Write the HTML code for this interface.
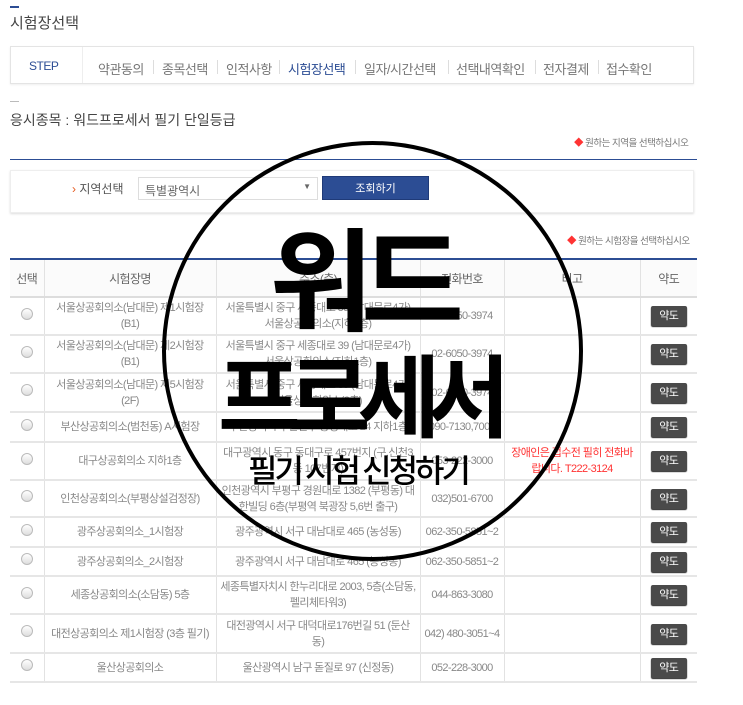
<!DOCTYPE html>
<html><head><meta charset="utf-8"><style>
*{margin:0;padding:0;box-sizing:border-box}
body{width:743px;height:705px;background:#fff;font-family:"Liberation Sans","Noto Sans CJK KR",sans-serif;color:#666;position:relative;overflow:hidden}
.abs{position:absolute}
.step{left:10px;top:46px;width:684px;height:38px;border:1px solid #e4e4e4;box-shadow:0 1px 2px #eee}
.step span{position:absolute;top:12px;font-size:13px;color:#777;letter-spacing:-0.5px}
.sep{position:absolute;top:13px;width:1px;height:14px;background:#ddd}
table{position:absolute;left:10px;top:258px;width:687px;border-collapse:collapse;font-size:11px;color:#888;letter-spacing:-0.6px;text-align:center}
th{height:38px;font-weight:normal;color:#666;font-size:12px;border-top:2px solid #2c4d94;border-bottom:2px solid #ddd;background:#fbfbfb}
td{border-bottom:2px solid #e6e6e6;line-height:16px}
th,td{border-left:1px solid #e2e2e2}
th:first-child,td:first-child{border-left:none}
.rd{display:inline-block;width:12px;height:12px;border-radius:50%;border:1px solid #bbb;background:linear-gradient(#fff,#ddd)}
.btn{display:inline-block;width:36px;height:20px;line-height:20px;background:#4a4a4a;color:#fff;font-size:11px;border-radius:2px;box-shadow:0 1px 1px #222}
.red{color:#ff3333}
.big{font-family:"Noto Sans CJK KR",sans-serif;font-weight:700;color:#000;white-space:nowrap;line-height:1}
</style></head><body>
<div class="abs" style="left:10px;top:6px;width:9px;height:2px;background:#2c4d94"></div>
<div class="abs" style="left:10px;top:12px;font-size:15px;color:#444">시험장선택</div>
<div class="abs step">
<span style="left:18px;color:#2c4d94;font-size:12px">STEP</span>
<div class="sep" style="left:71px;top:0;height:36px;background:#eee"></div>
<span style="left:87px">약관동의</span><div class="sep" style="left:142px"></div>
<span style="left:151px">종목선택</span><div class="sep" style="left:206px"></div>
<span style="left:215px">인적사항</span><div class="sep" style="left:268px"></div>
<span style="left:277px;color:#2c4d94">시험장선택</span><div class="sep" style="left:344px"></div>
<span style="left:353px">일자/시간선택</span><div class="sep" style="left:437px"></div>
<span style="left:445px">선택내역확인</span><div class="sep" style="left:524px"></div>
<span style="left:532px">전자결제</span><div class="sep" style="left:587px"></div>
<span style="left:595px">접수확인</span>
</div>
<div class="abs" style="left:10px;top:101px;width:9px;height:1px;background:#bbb"></div>
<div class="abs" style="left:10px;top:110px;font-size:14px;color:#444">응시종목 : 워드프로세서 필기 단일등급</div>
<div class="abs" style="left:574px;top:135px;font-size:9.5px;color:#777;letter-spacing:-0.5px"><span class="red">◆</span> 원하는 지역을 선택하십시오</div>
<div class="abs" style="left:10px;top:159px;width:687px;height:1px;background:#2c4d94"></div>
<div class="abs" style="left:10px;top:170px;width:684px;height:43px;border:1px solid #eee;box-shadow:0 1px 2px #ddd"></div>
<div class="abs" style="left:72px;top:180px;font-size:12px;color:#555"><span style="color:#e65a1e">›</span> 지역선택</div>
<div class="abs" style="left:138px;top:177px;width:180px;height:23px;border:1px solid #ddd;font-size:12px;padding:4px 6px;color:#666">특별광역시<span style="position:absolute;right:6px;top:4px;font-size:8px">▼</span></div>
<div class="abs" style="left:322px;top:176px;width:107px;height:24px;background:#2c4d94;color:#fff;font-size:11px;text-align:center;line-height:24px;border:1px solid #1f3a78">조회하기</div>
<div class="abs" style="left:567px;top:233px;font-size:9.5px;color:#777;letter-spacing:-0.5px"><span class="red">◆</span> 원하는 시험장을 선택하십시오</div>
<table>
<tr><th style="width:34px">선택</th><th style="width:172px">시험장명</th><th style="width:204px">주소(층)</th><th style="width:84px">전화번호</th><th style="width:136px">비고</th><th>약도</th></tr>
<tr style="height:38px"><td><span class="rd"></span></td><td>서울상공회의소(남대문) 제1시험장<br>(B1)</td><td>서울특별시 중구 세종대로 39 (남대문로4가)<br>서울상공회의소(지하1층)</td><td>02-6050-3974</td><td></td><td><span class="btn">약도</span></td></tr>
<tr style="height:38px"><td><span class="rd"></span></td><td>서울상공회의소(남대문) 제2시험장<br>(B1)</td><td>서울특별시 중구 세종대로 39 (남대문로4가)<br>서울상공회의소(지하1층)</td><td>02-6050-3974</td><td></td><td><span class="btn">약도</span></td></tr>
<tr style="height:39px"><td><span class="rd"></span></td><td>서울상공회의소(남대문) 제5시험장<br>(2F)</td><td>서울특별시 중구 세종대로 39 (남대문로4가)<br>서울상공회의소(2층)</td><td>02-6050-3974</td><td></td><td><span class="btn">약도</span></td></tr>
<tr style="height:30px"><td><span class="rd"></span></td><td>부산상공회의소(범천동) A시험장</td><td>부산광역시 부산진구 황령대로 24 지하1층</td><td>090-7130,7000</td><td></td><td><span class="btn">약도</span></td></tr>
<tr style="height:38px"><td><span class="rd"></span></td><td>대구상공회의소 지하1층</td><td>대구광역시 동구 동대구로 457번지 (구.신천3<br>동 107번지)</td><td>053-222-3000</td><td class="red">장애인은 접수전 필히 전화바<br>랍니다. T222-3124</td><td><span class="btn">약도</span></td></tr>
<tr style="height:37px"><td><span class="rd"></span></td><td>인천상공회의소(부평상설검정장)</td><td>인천광역시 부평구 경원대로 1382 (부평동) 대<br>한빌딩 6층(부평역 북광장 5,6번 출구)</td><td>032)501-6700</td><td></td><td><span class="btn">약도</span></td></tr>
<tr style="height:30px"><td><span class="rd"></span></td><td>광주상공회의소_1시험장</td><td>광주광역시 서구 대남대로 465 (농성동)</td><td>062-350-5851~2</td><td></td><td><span class="btn">약도</span></td></tr>
<tr style="height:29px"><td><span class="rd"></span></td><td>광주상공회의소_2시험장</td><td>광주광역시 서구 대남대로 465 (농성동)</td><td>062-350-5851~2</td><td></td><td><span class="btn">약도</span></td></tr>
<tr style="height:38px"><td><span class="rd"></span></td><td>세종상공회의소(소담동) 5층</td><td>세종특별자치시 한누리대로 2003, 5층(소담동,<br>펠리체타워3)</td><td>044-863-3080</td><td></td><td><span class="btn">약도</span></td></tr>
<tr style="height:39px"><td><span class="rd"></span></td><td>대전상공회의소 제1시험장 (3층 필기)</td><td>대전광역시 서구 대덕대로176번길 51 (둔산<br>동)</td><td>042) 480-3051~4</td><td></td><td><span class="btn">약도</span></td></tr>
<tr style="height:29px"><td><span class="rd"></span></td><td>울산상공회의소</td><td>울산광역시 남구 돋질로 97 (신정동)</td><td>052-228-3000</td><td></td><td><span class="btn">약도</span></td></tr>
</table>
<div class="abs" style="left:162px;top:141px;width:421px;height:420px;border:4px solid #000;border-radius:50%"></div>
<div class="abs big" style="left:270px;top:218px;font-size:112px;letter-spacing:-12px">워드</div>
<div class="abs big" style="left:218px;top:346px;font-size:90px;letter-spacing:-13px">프로세서</div>
<div class="abs big" style="left:248px;top:453px;font-size:32px;font-weight:500;letter-spacing:-3px">필기 시험 신청하기</div>
</body></html>
